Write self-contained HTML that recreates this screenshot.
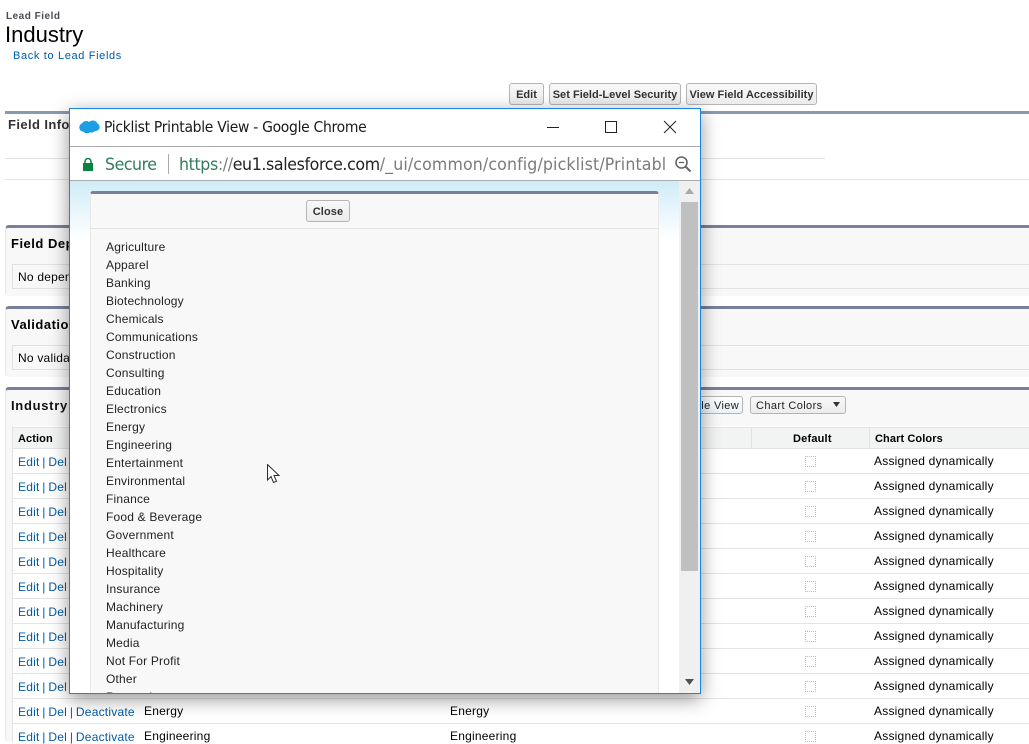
<!DOCTYPE html>
<html><head><meta charset="utf-8"><style>
html,body{margin:0;padding:0;background:#fff}
body{width:1029px;height:742px;position:relative;overflow:hidden;font-family:"Liberation Sans",Arial,sans-serif;font-size:12px;color:#000}
.a{position:absolute;white-space:nowrap}
.sec{position:absolute;left:5px;width:1024px;background:#f8f8f8;border-top:3px solid #78809b;border-left:1px solid #e8e8e8;box-sizing:border-box;border-radius:4px 0 0 4px}
.l{position:absolute;height:1px;background:#e3e3e3}
.btn{position:absolute;box-sizing:border-box;border:1px solid #b5b5b5;border-radius:3px;background:linear-gradient(#f8f8f8,#ececec);font-weight:bold;font-size:11px;color:#333;text-align:center;white-space:nowrap;letter-spacing:.02px}
.lnk{color:#015ba7;word-spacing:-.8px}
.t{letter-spacing:.22px;line-height:14px}
.h{font-size:11px;font-weight:bold;letter-spacing:.1px;line-height:14px}
.cb{position:absolute;left:805px;width:11px;height:11px;box-sizing:border-box;border:1px dotted #bbb}
.it{position:absolute;left:106px;line-height:14px;letter-spacing:.19px;color:#222;white-space:nowrap}
</style></head><body>
<div class="a" style="left:6px;top:11px;font-size:10px;font-weight:bold;color:#4a4a56;letter-spacing:.5px;line-height:12px">Lead Field</div>
<div class="a" style="left:5px;top:22px;font-size:22px;line-height:25px;color:#000">Industry</div>
<div class="a t lnk" style="left:13px;top:49px;font-size:11px;letter-spacing:.65px;word-spacing:0">Back to Lead Fields</div>
<div class="btn" style="left:509px;top:83px;width:35px;height:22px;line-height:22px">Edit</div>
<div class="btn" style="left:549px;top:83px;width:132px;height:22px;line-height:22px">Set Field-Level Security</div>
<div class="btn" style="left:686px;top:83px;width:131px;height:22px;line-height:22px">View Field Accessibility</div>
<div class="a" style="left:5px;top:111px;width:1024px;height:3px;background:#8a97b5"></div>
<div class="a" style="left:8px;top:117px;font-weight:bold;font-size:13px;color:#333;letter-spacing:.4px;line-height:15px">Field Information</div>
<div class="l" style="left:5px;top:158px;width:820px"></div>
<div class="l" style="left:5px;top:179px;width:1024px"></div>

<div class="sec" style="top:225px;height:71px"></div>
<div class="a" style="left:11px;top:236px;font-weight:bold;font-size:13px;letter-spacing:.5px;line-height:15px">Field Dependencies</div>
<div class="l" style="left:12px;top:264px;width:1017px;background:#dfe1e3"></div>
<div class="l" style="left:12px;top:288px;width:1017px;background:#dfe1e3"></div>
<div class="a" style="left:12px;top:264px;width:1px;height:25px;background:#dfe1e3"></div>
<div class="a t" style="left:18px;top:270px">No dependencies</div>

<div class="sec" style="top:306px;height:71px"></div>
<div class="a" style="left:11px;top:317px;font-weight:bold;font-size:13px;letter-spacing:.5px;line-height:15px">Validation Rules</div>
<div class="l" style="left:12px;top:345px;width:1017px;background:#dfe1e3"></div>
<div class="l" style="left:12px;top:369px;width:1017px;background:#dfe1e3"></div>
<div class="a" style="left:12px;top:345px;width:1px;height:25px;background:#dfe1e3"></div>
<div class="a t" style="left:18px;top:351px">No validation rules</div>

<div class="sec" style="top:387px;height:355px"></div>
<div class="a" style="left:11px;top:398px;font-weight:bold;font-size:13px;letter-spacing:.7px;line-height:15px;color:#111">Industry Picklist</div>
<div class="btn" style="left:640px;top:396px;width:103px;height:18px;line-height:18px;font-weight:normal;text-align:right;padding-right:3px;font-size:11px;letter-spacing:.35px;background:linear-gradient(#fff,#eaf3fa);color:#222">Printable View</div>
<div class="btn" style="left:750px;top:396px;width:96px;height:18px;line-height:18px;font-weight:normal;text-align:left;padding-left:5px;letter-spacing:.4px;color:#222">Chart Colors</div>
<svg class="a" style="left:832px;top:401px" width="10" height="7"><path d="M1 1h7L4.500 6z" fill="#333"/></svg>

<div class="a" style="left:12px;top:426px;width:1017px;height:316px;background:#fff;border-left:1px solid #e3e3e3"></div>
<div class="a" style="left:13px;top:427px;width:1016px;height:22px;background:#f2f3f3;border-top:1px solid #e0e3e5;border-bottom:1px solid #e0e3e5;box-sizing:border-box"></div>
<div class="a" style="left:751px;top:427px;width:1px;height:21px;background:#e0e3e5"></div>
<div class="a" style="left:869px;top:427px;width:1px;height:21px;background:#e0e3e5"></div>
<div class="a h" style="left:18px;top:432px">Action</div>
<div class="a h" style="left:793px;top:432px;letter-spacing:.2px">Default</div>
<div class="a h" style="left:875px;top:432px">Chart Colors</div>

<div class="l" style="left:13px;top:473px;width:1016px"></div><div class="a t lnk" style="left:18px;top:455px">Edit | Del</div><div class="cb" style="top:456px"></div><div class="a t" style="left:874px;top:454px">Assigned dynamically</div>
<div class="l" style="left:13px;top:498px;width:1016px"></div><div class="a t lnk" style="left:18px;top:480px">Edit | Del</div><div class="cb" style="top:481px"></div><div class="a t" style="left:874px;top:479px">Assigned dynamically</div>
<div class="l" style="left:13px;top:523px;width:1016px"></div><div class="a t lnk" style="left:18px;top:505px">Edit | Del</div><div class="cb" style="top:506px"></div><div class="a t" style="left:874px;top:504px">Assigned dynamically</div>
<div class="l" style="left:13px;top:548px;width:1016px"></div><div class="a t lnk" style="left:18px;top:530px">Edit | Del</div><div class="cb" style="top:531px"></div><div class="a t" style="left:874px;top:529px">Assigned dynamically</div>
<div class="l" style="left:13px;top:573px;width:1016px"></div><div class="a t lnk" style="left:18px;top:555px">Edit | Del</div><div class="cb" style="top:556px"></div><div class="a t" style="left:874px;top:554px">Assigned dynamically</div>
<div class="l" style="left:13px;top:598px;width:1016px"></div><div class="a t lnk" style="left:18px;top:580px">Edit | Del</div><div class="cb" style="top:581px"></div><div class="a t" style="left:874px;top:579px">Assigned dynamically</div>
<div class="l" style="left:13px;top:623px;width:1016px"></div><div class="a t lnk" style="left:18px;top:605px">Edit | Del</div><div class="cb" style="top:606px"></div><div class="a t" style="left:874px;top:604px">Assigned dynamically</div>
<div class="l" style="left:13px;top:648px;width:1016px"></div><div class="a t lnk" style="left:18px;top:630px">Edit | Del</div><div class="cb" style="top:631px"></div><div class="a t" style="left:874px;top:629px">Assigned dynamically</div>
<div class="l" style="left:13px;top:673px;width:1016px"></div><div class="a t lnk" style="left:18px;top:655px">Edit | Del</div><div class="cb" style="top:656px"></div><div class="a t" style="left:874px;top:654px">Assigned dynamically</div>
<div class="l" style="left:13px;top:698px;width:1016px"></div><div class="a t lnk" style="left:18px;top:680px">Edit | Del</div><div class="cb" style="top:681px"></div><div class="a t" style="left:874px;top:679px">Assigned dynamically</div>
<div class="l" style="left:13px;top:723px;width:1016px"></div><div class="a t lnk" style="left:18px;top:705px">Edit | Del | Deactivate</div><div class="a t" style="left:144px;top:704px">Energy</div><div class="a t" style="left:450px;top:704px">Energy</div><div class="cb" style="top:706px"></div><div class="a t" style="left:874px;top:704px">Assigned dynamically</div>
<div class="a t lnk" style="left:18px;top:730px">Edit | Del | Deactivate</div><div class="a t" style="left:144px;top:729px">Engineering</div><div class="a t" style="left:450px;top:729px">Engineering</div><div class="cb" style="top:731px"></div><div class="a t" style="left:874px;top:729px">Assigned dynamically</div>

<!-- Chrome popup -->
<div class="a" style="left:69px;top:108px;width:632px;height:586px;box-sizing:border-box;border:1px solid #1a86dc;background:#fff;box-shadow:0 5px 18px rgba(0,0,0,.42);overflow:hidden">
 <svg style="position:absolute;left:9px;top:11px" width="21" height="15" viewBox="0 0 21 15"><path d="M5 1.500C7 .500 9 1 10 2c1.500-1.500 4-2 6-1 1 .5 2 1 2.500 2.500 1.500 1 2.500 2.500 2 4.500-.5 2-2.500 3-4.500 3-1.500 1.500-3.500 2-5 1.200-2 1.500-5 1.300-6.500-.5C2 11.500.500 10 .3 7.500.2 5.500 1.500 4 3 3.500 3.500 2.500 4 2 5 1.500z" fill="#1b9ee3"/></svg>
 <div class="a" style="left:34px;top:9px;font-size:15px;line-height:19px;font-family:'DejaVu Sans',sans-serif;letter-spacing:-.33px;transform-origin:0 0;transform:scaleX(.93);color:#1a1a1a">Picklist Printable View - Google Chrome</div>
 <div class="a" style="left:477px;top:18px;width:12px;height:1px;background:#222"></div>
 <div class="a" style="left:535px;top:12px;width:12px;height:12px;box-sizing:border-box;border:1px solid #222"></div>
 <svg style="position:absolute;left:593px;top:11px" width="14" height="14"><path d="M1 1l12 12M13 1L1 13" stroke="#222" stroke-width="1" fill="none"/></svg>
 <div class="a" style="left:0;top:37px;width:630px;height:1px;background:#aaa"></div>
 <svg style="position:absolute;left:12px;top:48px" width="12" height="15" viewBox="0 0 12 15"><path d="M3 6V4.500a3 3 0 0 1 6 0V6" stroke="#0b8043" stroke-width="1.500" fill="none"/><rect x="1" y="6" width="10" height="8" fill="#0b8043"/></svg>
 <div class="a" style="left:35px;top:45px;font-size:17px;line-height:22px;color:#2e7d5b;font-family:'DejaVu Sans',sans-serif;letter-spacing:-.5px;transform-origin:0 0;transform:scaleX(.93)">Secure</div>
 <div class="a" style="left:98px;top:45px;width:1px;height:20px;background:#aaa"></div>
 <div class="a" style="left:109px;top:44px;width:487px;height:25px;overflow:hidden"><div style="padding-top:1px;font-size:17px;line-height:22px;font-family:'DejaVu Sans',sans-serif;letter-spacing:-.4px;color:#7b7b7b;white-space:nowrap;transform-origin:0 0;transform:scaleX(.93)"><span style="color:#2e7d5b">https</span>://<span style="color:#222">eu1.salesforce.com</span><span style="letter-spacing:.13px">/_ui/common/config/picklist/Printabl</span></div></div>
 <svg style="position:absolute;left:604px;top:46px" width="18" height="18" viewBox="0 0 18 18"><circle cx="7.500" cy="7.500" r="5.500" stroke="#666" stroke-width="1.600" fill="none"/><path d="M4.800 7.500h5.400" stroke="#666" stroke-width="1.300"/><path d="M11.500 11.500l5 5" stroke="#666" stroke-width="2"/></svg>
 <div class="a" style="left:0;top:71px;width:630px;height:1px;background:#aaa"></div>
 <div class="a" style="left:0;top:72px;width:609px;height:512px;overflow:hidden;background:#fff">
  <div class="a" style="left:0;top:0;width:609px;height:58px;background:linear-gradient(#cfecf7,#fff)"></div>
  <div class="a" style="left:20px;top:10px;width:569px;height:510px;box-sizing:border-box;background:#f8f8f8;border-top:3px solid #78809b;border-left:1px solid #e8e8e8;border-right:1px solid #e8e8e8;border-radius:3px 3px 0 0"></div>
  <div class="btn" style="left:236px;top:19px;width:44px;height:22px;line-height:22px;letter-spacing:.1px">Close</div>
  <div class="a" style="left:21px;top:47px;width:567px;height:1px;background:#e3e3e3"></div>
 </div>
 <div class="a" style="left:609px;top:72px;width:21px;height:512px;background:#f0f0f0">
  <svg style="position:absolute;left:5px;top:7px" width="11" height="7"><path d="M5.500 0L10 6H1z" fill="#a8a8a8"/></svg>
  <div class="a" style="left:2px;top:21px;width:17px;height:369px;background:#c0c0c0"></div>
  <svg style="position:absolute;left:5px;top:498px" width="11" height="7"><path d="M1 0h9L5.500 6z" fill="#505050"/></svg>
 </div>
</div>
<div class="a" style="left:70px;top:181px;width:609px;height:512px;overflow:hidden">
<div class="it" style="left:36px;top:59px">Agriculture</div>
<div class="it" style="left:36px;top:77px">Apparel</div>
<div class="it" style="left:36px;top:95px">Banking</div>
<div class="it" style="left:36px;top:113px">Biotechnology</div>
<div class="it" style="left:36px;top:131px">Chemicals</div>
<div class="it" style="left:36px;top:149px">Communications</div>
<div class="it" style="left:36px;top:167px">Construction</div>
<div class="it" style="left:36px;top:185px">Consulting</div>
<div class="it" style="left:36px;top:203px">Education</div>
<div class="it" style="left:36px;top:221px">Electronics</div>
<div class="it" style="left:36px;top:239px">Energy</div>
<div class="it" style="left:36px;top:257px">Engineering</div>
<div class="it" style="left:36px;top:275px">Entertainment</div>
<div class="it" style="left:36px;top:293px">Environmental</div>
<div class="it" style="left:36px;top:311px">Finance</div>
<div class="it" style="left:36px;top:329px">Food &amp; Beverage</div>
<div class="it" style="left:36px;top:347px">Government</div>
<div class="it" style="left:36px;top:365px">Healthcare</div>
<div class="it" style="left:36px;top:383px">Hospitality</div>
<div class="it" style="left:36px;top:401px">Insurance</div>
<div class="it" style="left:36px;top:419px">Machinery</div>
<div class="it" style="left:36px;top:437px">Manufacturing</div>
<div class="it" style="left:36px;top:455px">Media</div>
<div class="it" style="left:36px;top:473px">Not For Profit</div>
<div class="it" style="left:36px;top:491px">Other</div>
<div class="it" style="left:36px;top:509px">Recreation</div>
<svg style="position:absolute;left:197px;top:283px" width="14" height="21" viewBox="0 0 14 21"><path d="M.500.500V16l3.500-3.500L6.500 18.500l3-1.300L7 11.500h5z" fill="#fff" stroke="#2a2a3a" stroke-width="1"/></svg>
</div>
</body></html>
